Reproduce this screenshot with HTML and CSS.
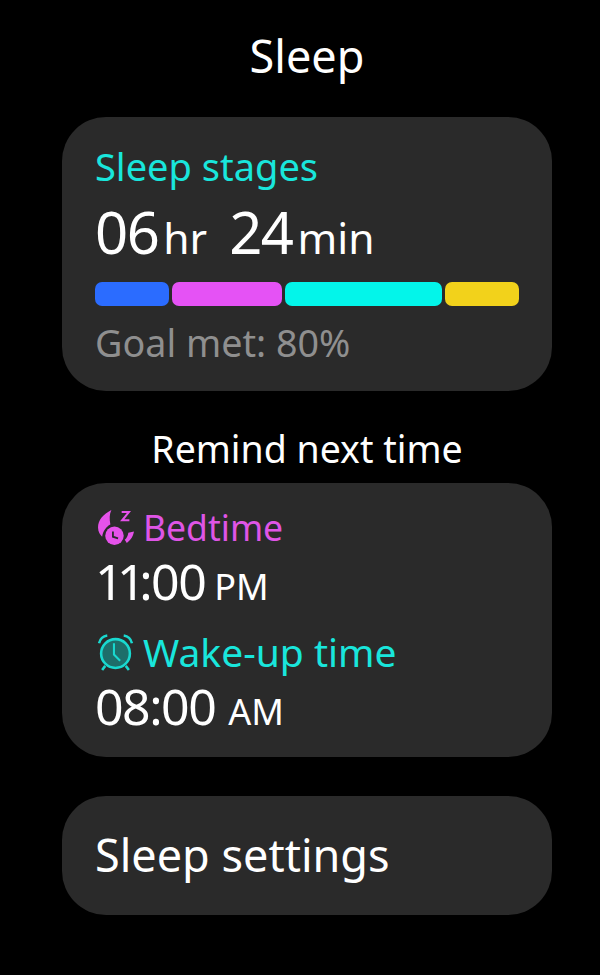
FILE: index.html
```html
<!DOCTYPE html>
<html lang="en">
<head>
<meta charset="utf-8">
<title>Sleep</title>
<link rel="stylesheet" href="styles.css">
</head>
<body>
<main class="screen">
  <h1 class="title">Sleep</h1>
  <section class="card card-stages">
    <div class="label stages cyan">Sleep stages</div>
    <div class="duration"><span class="num">06</span><span class="unit">hr</span><span class="num second">24</span><span class="unit">min</span></div>
    <div class="bar">
      <span class="seg seg-blue"></span>
      <span class="seg seg-pink"></span>
      <span class="seg seg-cyan"></span>
      <span class="seg seg-yellow"></span>
    </div>
    <div class="goal">Goal met: 80%</div>
  </section>
  <h2 class="subtitle">Remind next time</h2>
  <section class="card card-remind">
    <div class="row label bed pink">
      <svg class="icon" viewBox="0 0 36 36" aria-hidden="true">
        <path fill="#e552ea" d="M14 1 C6 5 1 11 1 18 C1 22 3 25 5 27 C6 21 9 17 13 15 C12 10 12 5 14 1Z"/>
        <circle cx="17" cy="26" r="9" fill="#e552ea"/>
        <path d="M15.500 22v5l5 1.500" fill="none" stroke="#2b2b2b" stroke-width="1.800"/>
        <path fill="#e552ea" d="M36 22 C35 27 33 30 29 33 L27 30 C29 28 30 26 30.500 23Z"/>
        <path d="M24 3h7l-6.500 8h7" fill="none" stroke="#e552ea" stroke-width="2"/>
      </svg>
      <span>Bedtime</span>
    </div>
    <div class="time"><span class="num-sm"><span class="ones">11</span>:00</span><span class="ampm pm">PM</span></div>
    <div class="row label wake cyan">
      <svg class="icon" viewBox="0 0 36 36" aria-hidden="true">
        <circle cx="18" cy="19" r="14" fill="#1d6e6a" stroke="#19d8cf" stroke-width="2.500"/>
        <path d="M16.500 9v11l6 6" fill="none" stroke="#19d8cf" stroke-width="2"/>
        <path d="M2 9 C3 5 6 2 10 1.500 M34 9 C33 5 30 2 26 1.500 M8 31 L5 35 M28 31 L31 35" fill="none" stroke="#19d8cf" stroke-width="2.500"/>
      </svg>
      <span>Wake-up time</span>
    </div>
    <div class="time"><span class="num-sm">08:00</span><span class="ampm am">AM</span></div>
  </section>
  <section class="card card-settings">Sleep settings</section>
</main>
</body>
</html>
```
FILE: styles.css
```css
* { box-sizing: border-box; margin: 0; padding: 0; }
html, body { background: #000; }
body { width: 600px; height: 975px; overflow: hidden; font-family: "Noto Sans", "Liberation Sans", sans-serif; color: #fff; }
.screen { display: flex; flex-direction: column; align-items: center; padding: 28px 0 0 14px; }
.title { font-size: 45px; font-weight: 400; line-height: 56px; height: 89px; }
.card { width: 490px; background: #2a2a2a; border-radius: 44px; padding: 0 33px; }
.card-stages { height: 274px; padding-top: 26px; }
.label { line-height: 46px; }
.stages { font-size: 38px; }
.bed { font-size: 35.500px; }
.wake { font-size: 39px; margin-top: 17px; }
.cyan { color: #19e6dc; }
.pink { color: #df55e6; }
.duration { display: flex; align-items: baseline; height: 85px; line-height: 85px; }
.num { font-size: 58px; letter-spacing: -1.500px; }
.second { margin-left: 22px; }
.unit { font-size: 42.500px; margin-left: 5px; }
.bar { display: flex; gap: 3px; height: 24px; margin-top: 8px; }
.seg { border-radius: 7px; display: block; }
.seg-blue { width: 74px; background: #2b6cff; }
.seg-pink { width: 110px; background: #e552f5; }
.seg-cyan { width: 158px; background: #03f5ea; }
.seg-yellow { width: 74px; background: #f2d21b; }
.goal { color: #8f8f8f; font-size: 37.700px; line-height: 46px; margin-top: 14px; }
.subtitle { font-size: 37.500px; font-weight: 400; line-height: 46px; height: 46px; margin-top: 35px; margin-bottom: 11px; }
.card-remind { height: 274px; padding-top: 21px; }
.row { display: flex; align-items: center; gap: 9px; margin-left: 2px; }
.icon { width: 37px; height: 37px; flex: none; }
.time { display: flex; align-items: baseline; height: 62px; line-height: 62px; }
.num-sm { font-size: 50px; letter-spacing: -1.500px; }
.ones { letter-spacing: -6.500px; }
.ampm { font-size: 36px; }
.pm { margin-left: 9px; }
.am { margin-left: 13px; }
.card-settings { height: 119px; margin-top: 39px; font-size: 45px; line-height: 117px; }
```
